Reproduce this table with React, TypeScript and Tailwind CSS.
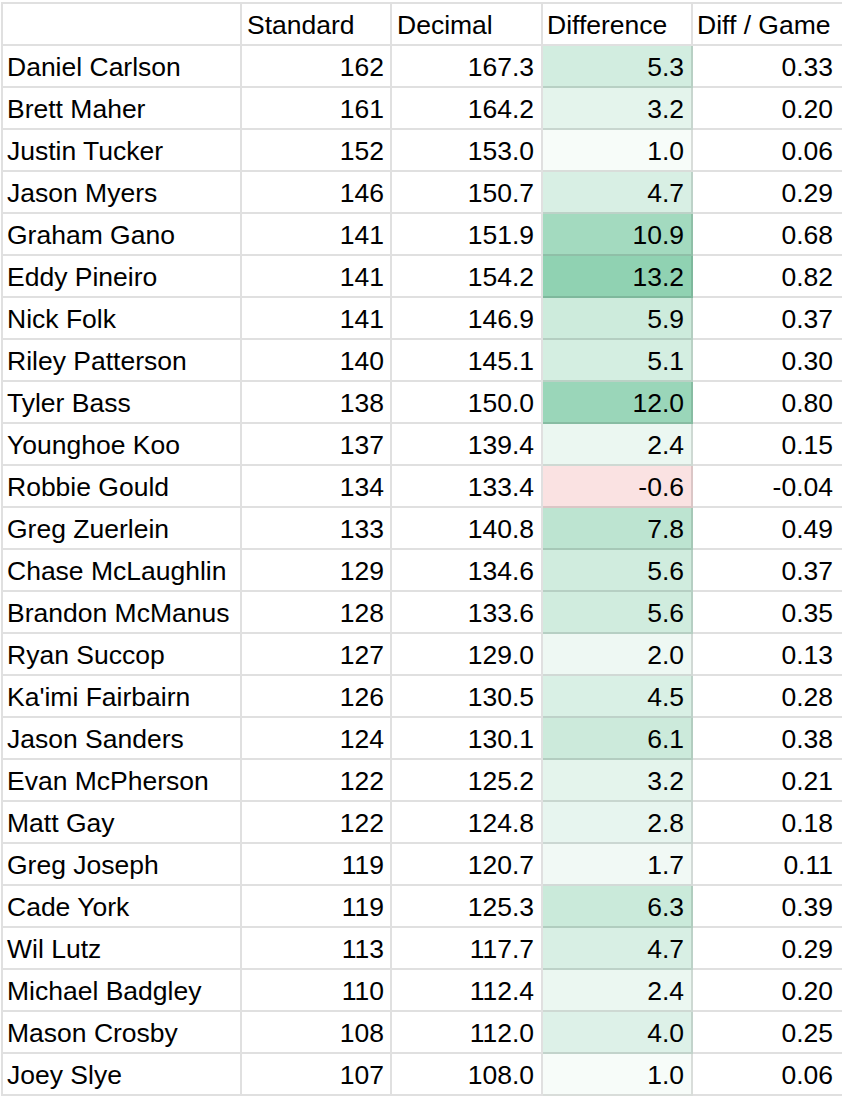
import React from 'react';

type Row = { name: string; standard: number; decimal: string; diff: string; perGame: string };

const rows: Row[] = [
    { name: 'Daniel Carlson', standard: 162, decimal: '167.3', diff: '5.3', perGame: '0.33' },
    { name: 'Brett Maher', standard: 161, decimal: '164.2', diff: '3.2', perGame: '0.20' },
    { name: 'Justin Tucker', standard: 152, decimal: '153.0', diff: '1.0', perGame: '0.06' },
    { name: 'Jason Myers', standard: 146, decimal: '150.7', diff: '4.7', perGame: '0.29' },
    { name: 'Graham Gano', standard: 141, decimal: '151.9', diff: '10.9', perGame: '0.68' },
    { name: 'Eddy Pineiro', standard: 141, decimal: '154.2', diff: '13.2', perGame: '0.82' },
    { name: 'Nick Folk', standard: 141, decimal: '146.9', diff: '5.9', perGame: '0.37' },
    { name: 'Riley Patterson', standard: 140, decimal: '145.1', diff: '5.1', perGame: '0.30' },
    { name: 'Tyler Bass', standard: 138, decimal: '150.0', diff: '12.0', perGame: '0.80' },
    { name: 'Younghoe Koo', standard: 137, decimal: '139.4', diff: '2.4', perGame: '0.15' },
    { name: 'Robbie Gould', standard: 134, decimal: '133.4', diff: '-0.6', perGame: '-0.04' },
    { name: 'Greg Zuerlein', standard: 133, decimal: '140.8', diff: '7.8', perGame: '0.49' },
    { name: 'Chase McLaughlin', standard: 129, decimal: '134.6', diff: '5.6', perGame: '0.37' },
    { name: 'Brandon McManus', standard: 128, decimal: '133.6', diff: '5.6', perGame: '0.35' },
    { name: 'Ryan Succop', standard: 127, decimal: '129.0', diff: '2.0', perGame: '0.13' },
    { name: "Ka'imi Fairbairn", standard: 126, decimal: '130.5', diff: '4.5', perGame: '0.28' },
    { name: 'Jason Sanders', standard: 124, decimal: '130.1', diff: '6.1', perGame: '0.38' },
    { name: 'Evan McPherson', standard: 122, decimal: '125.2', diff: '3.2', perGame: '0.21' },
    { name: 'Matt Gay', standard: 122, decimal: '124.8', diff: '2.8', perGame: '0.18' },
    { name: 'Greg Joseph', standard: 119, decimal: '120.7', diff: '1.7', perGame: '0.11' },
    { name: 'Cade York', standard: 119, decimal: '125.3', diff: '6.3', perGame: '0.39' },
    { name: 'Wil Lutz', standard: 113, decimal: '117.7', diff: '4.7', perGame: '0.29' },
    { name: 'Michael Badgley', standard: 110, decimal: '112.4', diff: '2.4', perGame: '0.20' },
    { name: 'Mason Crosby', standard: 108, decimal: '112.0', diff: '4.0', perGame: '0.25' },
    { name: 'Joey Slye', standard: 107, decimal: '108.0', diff: '1.0', perGame: '0.06' },
];

// white -> sheets green (#57bb8a), scaled on the max difference
function scaleColor(v: number) {
    if (v < 0) return '#fae2e2';
    const f = (0.66 * v) / 13.2;
    const mix = (c: number) => Math.round(255 - f * (255 - c));
    return `rgb(${mix(0x57)}, ${mix(0xbb)}, ${mix(0x8a)})`;
}

const cols = 'grid grid-cols-[239px_150px_151px_150px_1fr]';
const cell = 'h-[42px] pt-[1px] leading-[40px] border-b-2 border-[rgba(0,0,0,0.12)] whitespace-nowrap';

export default function App() {
    return (
        <div className="w-[842px] h-[1098px] bg-white overflow-hidden text-black text-[26.5px] font-['Liberation_Sans',Arial,sans-serif]">
            <div className="ml-[1px] mt-[2px] border-t-2 border-l-2 border-[rgba(0,0,0,0.12)]">
                <div className={cols}>
                    <div className={`${cell} border-r-2 pl-[4px]`}></div>
                    <div className={`${cell} border-r-2 pl-[5px]`}>Standard</div>
                    <div className={`${cell} border-r-2 pl-[5px]`}>Decimal</div>
                    <div className={`${cell} border-r-2 pl-[4px]`}>Difference</div>
                    <div className={`${cell} pl-[4px]`}>Diff / Game</div>
                </div>
                {rows.map((r) => (
                    <div key={r.name} className={cols}>
                        <div className={`${cell} border-r-2 pl-[4px]`}>{r.name}</div>
                        <div className={`${cell} border-r-2 pr-[6px] text-right`}>{r.standard}</div>
                        <div className={`${cell} border-r-2 pr-[7px] text-right`}>{r.decimal}</div>
                        <div
                            className={`${cell} border-r-2 pr-[7px] text-right`}
                            style={{ backgroundColor: scaleColor(parseFloat(r.diff)) }}
                        >
                            {r.diff}
                        </div>
                        <div className={`${cell} pr-[9px] text-right`}>{r.perGame}</div>
                    </div>
                ))}
            </div>
        </div>
    );
}
